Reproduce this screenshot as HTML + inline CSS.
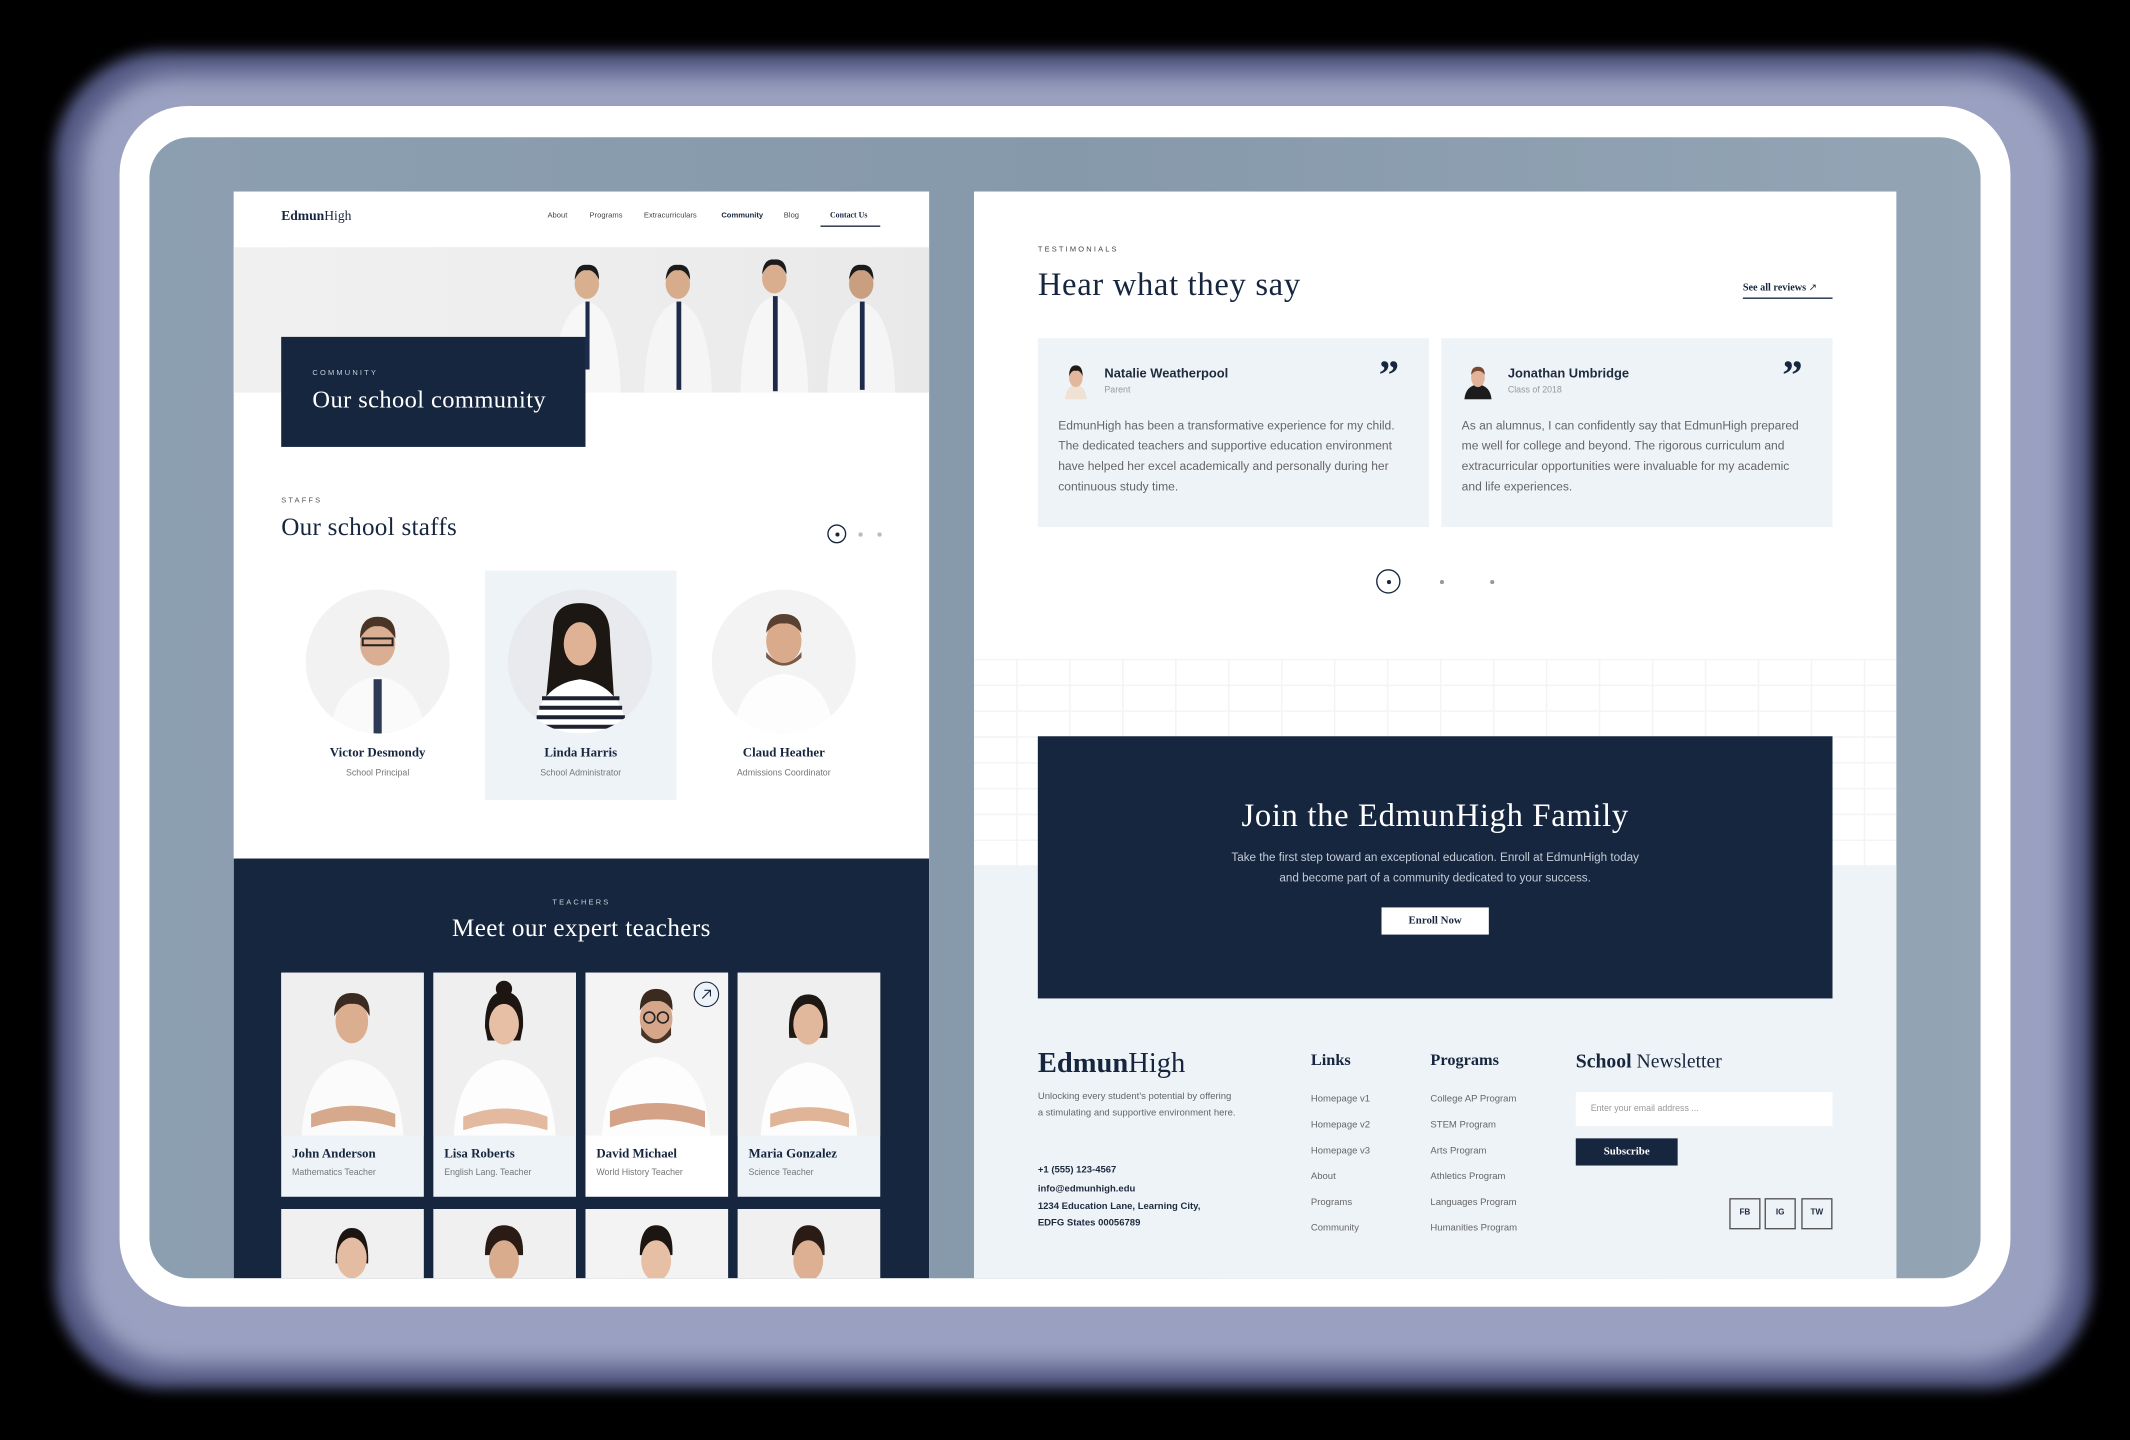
<!DOCTYPE html>
<html><head><meta charset="utf-8"><style>
*{margin:0;padding:0;box-sizing:border-box}
html,body{width:2130px;height:1440px;background:#000;overflow:hidden}
#s{position:absolute;left:0;top:0;width:1568px;height:1060px;transform:scale(1.35842);transform-origin:0 0;font-family:"Liberation Sans",sans-serif}
.a{position:absolute}
.serif{font-family:"Liberation Serif",serif}
.lbl{font-size:5.5px;letter-spacing:1.6px;color:#555}
.navy{background:#17263f}
.card{background:#eef3f8}
.nm{font-family:"Liberation Serif",serif;font-weight:bold;font-size:9.5px;color:#17263f}
.rl{font-size:6.5px;color:#777}
</style></head><body><div id="s">
<div class="a" style="left:40px;top:38px;width:1500px;height:984px;border-radius:80px;background:#6b72a8;filter:blur(5px);opacity:.8"></div>
<div class="a" style="left:60px;top:55px;width:1460px;height:950px;border-radius:70px;background:#9aa0c0;filter:blur(8px)"></div>
<div class="a" style="left:88px;top:78px;width:1392px;height:884px;border-radius:50px;background:#fff"></div>
<div class="a" style="left:110px;top:101px;width:1348px;height:840px;border-radius:30px;background:linear-gradient(90deg,#8c9fb0,#8699ab 50%,#93a5b5);overflow:hidden">

<!-- LEFT PAGE -->
<div class="a" style="left:62px;top:40px;width:512px;height:800px;background:#fff;overflow:hidden">
 <div class="a serif" style="left:35px;top:13px;font-size:10px;color:#17263f"><b>Edmun</b>High</div>
 <div class="a" style="left:231px;top:15px;font-size:5.6px;color:#444;white-space:nowrap">About</div>
 <div class="a" style="left:262px;top:15px;font-size:5.6px;color:#444">Programs</div>
 <div class="a" style="left:302px;top:15px;font-size:5.6px;color:#444">Extracurriculars</div>
 <div class="a" style="left:359px;top:15px;font-size:5.6px;color:#17263f;font-weight:bold">Community</div>
 <div class="a" style="left:405px;top:15px;font-size:5.6px;color:#444">Blog</div>
 <div class="a serif" style="left:439px;top:15px;font-size:5.8px;color:#17263f;font-weight:bold">Contact Us</div>
 <div class="a" style="left:432px;top:25px;width:44px;height:1.3px;background:#17263f"></div>
 <div class="a" style="left:0;top:41px;width:512px;height:107px;background:linear-gradient(90deg,#f0f0f0,#eeeeee 45%,#e9e9e9)">
  <svg class="a" style="left:225px;top:0" width="287" height="107" viewBox="0 0 287 107">
   <g><path d="M10 107 Q12 45 35 40 Q58 45 60 107Z" fill="#f7f7f7"/><ellipse cx="35" cy="27" rx="9" ry="11" fill="#d8b090"/><path d="M26 24 Q27 12 35 13 Q44 12 44 24 Q40 16 35 17 Q30 16 26 24Z" fill="#1b1b1b"/><rect x="34" y="40" width="3" height="50" fill="#1d2a4a"/></g>
   <g transform="translate(65,0)"><path d="M12 107 Q14 45 37 40 Q60 45 62 107Z" fill="#f5f5f5"/><ellipse cx="37" cy="27" rx="9" ry="11" fill="#d6ac8c"/><path d="M28 24 Q29 12 37 13 Q46 12 46 24 Q42 16 37 17 Q32 16 28 24Z" fill="#1b1b1b"/><rect x="36" y="40" width="3.5" height="65" fill="#1d2a4a"/></g>
   <g transform="translate(136,-4)"><path d="M12 111 Q14 45 37 40 Q60 45 62 111Z" fill="#f6f6f6"/><ellipse cx="37" cy="27" rx="9" ry="11" fill="#d8ae8e"/><path d="M28 24 Q29 12 37 13 Q46 12 46 24 Q42 16 37 17 Q32 16 28 24Z" fill="#1b1b1b"/><rect x="36" y="40" width="3.5" height="70" fill="#1d2a4a"/></g>
   <g transform="translate(200,0)"><path d="M12 107 Q14 45 37 40 Q60 45 62 107Z" fill="#f5f5f5"/><ellipse cx="37" cy="27" rx="9" ry="11" fill="#c99f80"/><path d="M28 24 Q29 12 37 13 Q46 12 46 24 Q42 16 37 17 Q32 16 28 24Z" fill="#1b1b1b"/><rect x="36" y="40" width="3.5" height="65" fill="#1d2a4a"/></g>
  </svg>
 </div>
 <div class="a navy" style="left:35px;top:107px;width:224px;height:81px">
  <div class="a lbl" style="left:23px;top:24px;color:#c5cdd9">COMMUNITY</div>
  <div class="a serif" style="left:23px;top:36px;font-size:18px;letter-spacing:.3px;color:#fff;white-space:nowrap">Our school community</div>
 </div>
 <div class="a lbl" style="left:35px;top:225px">STAFFS</div>
 <div class="a serif" style="left:35px;top:238px;font-size:18.5px;letter-spacing:.2px;color:#17263f;white-space:nowrap">Our school staffs</div>
 <div class="a" style="left:437px;top:245px;width:14px;height:14px;border:1px solid #17263f;border-radius:50%"><div class="a" style="left:4.5px;top:4.5px;width:3px;height:3px;border-radius:50%;background:#17263f"></div></div>
 <div class="a" style="left:460px;top:251px;width:2.5px;height:2.5px;border-radius:50%;background:#bbb"></div>
 <div class="a" style="left:474px;top:251px;width:2.5px;height:2.5px;border-radius:50%;background:#bbb"></div>
 <div class="a card" style="left:185px;top:279px;width:141px;height:169px"></div>
 <svg class="a" style="left:53px;top:293px" width="106" height="106" viewBox="0 0 106 106"><clipPath id="c1"><circle cx="53" cy="53" r="53"/></clipPath><g clip-path="url(#c1)"><rect width="106" height="106" fill="#f2f2f2"/><path d="M18 106 Q22 68 53 64 Q84 68 88 106Z" fill="#fafafa"/><rect x="50" y="66" width="6" height="40" fill="#2d3a55"/><ellipse cx="53" cy="40" rx="13" ry="16" fill="#d9ae92"/><path d="M40 36 Q40 20 53 20 Q67 20 66 36 Q60 26 53 27 Q46 26 40 36Z" fill="#4a3426"/><rect x="42" y="36" width="22" height="5" fill="none" stroke="#222" stroke-width="1.5"/></g></svg>
 <svg class="a" style="left:202px;top:293px" width="106" height="106" viewBox="0 0 106 106"><clipPath id="c2"><circle cx="53" cy="53" r="53"/></clipPath><g clip-path="url(#c2)"><rect width="106" height="106" fill="#e8eaed"/><path d="M33 30 Q33 10 53 10 Q75 10 75 34 L78 80 L28 80Z" fill="#1d1714"/><path d="M18 106 Q22 70 53 66 Q84 70 88 106Z" fill="#fff"/><path d="M25 80 H82 M23 87 H84 M21 94 H86 M20 101 H87" stroke="#1e2230" stroke-width="3"/><ellipse cx="53" cy="40" rx="12" ry="16" fill="#dfb296"/></g></svg>
 <svg class="a" style="left:352px;top:293px" width="106" height="106" viewBox="0 0 106 106"><clipPath id="c3"><circle cx="53" cy="53" r="53"/></clipPath><g clip-path="url(#c3)"><rect width="106" height="106" fill="#f3f3f3"/><path d="M16 106 Q20 66 53 62 Q86 66 90 106Z" fill="#fdfdfd"/><ellipse cx="53" cy="38" rx="13" ry="16" fill="#d9ab8c"/><path d="M40 46 Q53 62 66 46 L66 50 Q53 62 40 50Z" fill="#7a5a44"/><path d="M40 32 Q41 18 53 18 Q66 18 66 32 Q60 24 53 25 Q46 24 40 32Z" fill="#5a4030"/></g></svg>
 <div class="a nm" style="left:35px;top:409px;width:142px;text-align:center">Victor Desmondy</div>
 <div class="a rl" style="left:35px;top:425px;width:142px;text-align:center">School Principal</div>
 <div class="a nm" style="left:185px;top:409px;width:141px;text-align:center">Linda Harris</div>
 <div class="a rl" style="left:185px;top:425px;width:141px;text-align:center">School Administrator</div>
 <div class="a nm" style="left:334px;top:409px;width:142px;text-align:center">Claud Heather</div>
 <div class="a rl" style="left:334px;top:425px;width:142px;text-align:center">Admissions Coordinator</div>
 <div class="a navy" style="left:0;top:491px;width:512px;height:320px">
  <div class="a lbl" style="left:0;top:30px;width:512px;text-align:center;color:#c5cdd9">TEACHERS</div>
  <div class="a serif" style="left:0;top:42px;width:512px;text-align:center;font-size:18.5px;letter-spacing:.3px;color:#fff">Meet our expert teachers</div>
 </div>
</div>

<!-- RIGHT PAGE -->
<div class="a" style="left:607px;top:40px;width:679px;height:800px;background:#fff;overflow:hidden">
 <div class="a lbl" style="left:47px;top:40px;color:#444">TESTIMONIALS</div>
 <div class="a serif" style="left:47px;top:56px;font-size:24px;letter-spacing:.5px;color:#17263f;white-space:nowrap">Hear what they say</div>
 <div class="a serif" style="left:566px;top:66px;font-size:7.5px;font-weight:bold;color:#17263f;white-space:nowrap">See all reviews <span style="font-weight:normal;font-family:'Liberation Sans'">↗</span></div>
 <div class="a" style="left:566px;top:78px;width:66px;height:1.3px;background:#17263f"></div>
 <div class="a card" style="left:47px;top:108px;width:288px;height:139px">
  <svg class="a" style="left:16px;top:17px" width="24" height="28" viewBox="0 0 24 28"><path d="M4 28 Q5 18 12 17 Q19 18 20 28Z" fill="#efe1d4"/><ellipse cx="12" cy="12" rx="5" ry="7" fill="#e2b79c"/><path d="M7 11 Q7 3 12 3 Q17 3 17 11 Q15 6 12 7 Q9 6 7 11Z" fill="#221a16"/></svg>
  <div class="a" style="left:49px;top:21px;font-size:9.5px;font-weight:bold;color:#1e2a3e;white-space:nowrap">Natalie Weatherpool</div>
  <div class="a rl" style="left:49px;top:35px;color:#999">Parent</div>
  <div class="a serif" style="left:251px;top:13px;font-size:30px;font-weight:bold;color:#17263f;line-height:1">”</div>
  <div class="a" style="left:15px;top:57px;width:258px;font-size:8.9px;line-height:15px;color:#666">EdmunHigh has been a transformative experience for my child. The dedicated teachers and supportive education environment have helped her excel academically and personally during her continuous study time.</div>
 </div>
 <div class="a card" style="left:344px;top:108px;width:288px;height:139px">
  <svg class="a" style="left:14px;top:17px" width="26" height="28" viewBox="0 0 26 28"><path d="M3 28 Q4 18 13 17 Q22 18 23 28Z" fill="#1c1c1c"/><ellipse cx="13" cy="12" rx="5" ry="7" fill="#e0b39a"/><path d="M8 10 Q8 4 13 4 Q18 4 18 10 Q16 7 13 7 Q10 7 8 10Z" fill="#7a4a30"/></svg>
  <div class="a" style="left:49px;top:21px;font-size:9.5px;font-weight:bold;color:#1e2a3e;white-space:nowrap">Jonathan Umbridge</div>
  <div class="a rl" style="left:49px;top:35px;color:#999">Class of 2018</div>
  <div class="a serif" style="left:251px;top:13px;font-size:30px;font-weight:bold;color:#17263f;line-height:1">”</div>
  <div class="a" style="left:15px;top:57px;width:258px;font-size:8.9px;line-height:15px;color:#666">As an alumnus, I can confidently say that EdmunHigh prepared me well for college and beyond. The rigorous curriculum and extracurricular opportunities were invaluable for my academic and life experiences.</div>
 </div>
 <div class="a" style="left:296px;top:278px;width:18px;height:18px;border:1px solid #17263f;border-radius:50%"><div class="a" style="left:6.5px;top:6.5px;width:3px;height:3px;border-radius:50%;background:#17263f"></div></div>
 <div class="a" style="left:343px;top:286px;width:3px;height:3px;border-radius:50%;background:#999"></div>
 <div class="a" style="left:380px;top:286px;width:3px;height:3px;border-radius:50%;background:#999"></div>
 <div class="a" style="left:0;top:344px;width:679px;height:152px;background-image:linear-gradient(#f1f3f6 1px,transparent 1px),linear-gradient(90deg,#f1f3f6 1px,transparent 1px);background-size:39px 19px;background-position:-8px 0;opacity:.9"></div>
 <div class="a" style="left:0;top:496px;width:679px;height:304px;background:#eef3f8"></div>
 <div class="a navy" style="left:47px;top:401px;width:585px;height:193px">
  <div class="a serif" style="left:0;top:46px;width:585px;text-align:center;font-size:24px;letter-spacing:.5px;color:#fff">Join the EdmunHigh Family</div>
  <div class="a" style="left:0;top:82px;width:585px;text-align:center;font-size:8.6px;line-height:15px;color:#c3cbd7">Take the first step toward an exceptional education. Enroll at EdmunHigh today<br>and become part of a community dedicated to your success.</div>
  <div class="a serif" style="left:253px;top:126px;width:79px;height:20px;background:#fff;color:#17263f;font-size:8px;font-weight:bold;text-align:center;line-height:20px">Enroll Now</div>
 </div>
 <div class="a serif" style="left:47px;top:629px;font-size:21px;color:#17263f;white-space:nowrap"><b>Edmun</b>High</div>
 <div class="a" style="left:47px;top:661px;font-size:7px;line-height:12px;color:#666;white-space:nowrap">Unlocking every student's potential by offering<br>a stimulating and supportive environment here.</div>
 <div class="a" style="left:47px;top:714px;font-size:7px;font-weight:bold;color:#1e2a3e;line-height:14px;white-space:nowrap">+1 (555) 123-4567<br>info@edmunhigh.edu</div>
 <div class="a" style="left:47px;top:742px;font-size:7px;font-weight:bold;color:#1e2a3e;line-height:12px;white-space:nowrap">1234 Education Lane, Learning City,<br>EDFG States 00056789</div>
 <div class="a serif" style="left:248px;top:632px;font-size:12px;font-weight:bold;color:#17263f">Links</div>
 <div class="a" style="left:248px;top:659px;font-size:7px;line-height:19px;color:#666;white-space:nowrap">Homepage v1<br>Homepage v2<br>Homepage v3<br>About<br>Programs<br>Community</div>
 <div class="a serif" style="left:336px;top:632px;font-size:12px;font-weight:bold;color:#17263f">Programs</div>
 <div class="a" style="left:336px;top:659px;font-size:7px;line-height:19px;color:#666;white-space:nowrap">College AP Program<br>STEM Program<br>Arts Program<br>Athletics Program<br>Languages Program<br>Humanities Program</div>
 <div class="a serif" style="left:443px;top:633px;font-size:14.5px;color:#17263f;white-space:nowrap"><b>School</b> Newsletter</div>
 <div class="a" style="left:443px;top:663px;width:189px;height:25px;background:#fff;font-size:6.5px;color:#999;padding:9px 0 0 11px">Enter your email address ...</div>
 <div class="a navy serif" style="left:443px;top:697px;width:75px;height:20px;color:#fff;font-size:8px;font-weight:bold;text-align:center;line-height:20px">Subscribe</div>
 <div class="a" style="left:556px;top:741px;width:23px;height:23px;border:1px solid #555;font-size:6px;font-weight:bold;text-align:center;line-height:21px;color:#1e2a3e">FB</div>
 <div class="a" style="left:582px;top:741px;width:23px;height:23px;border:1px solid #555;font-size:6px;font-weight:bold;text-align:center;line-height:21px;color:#1e2a3e">IG</div>
 <div class="a" style="left:609px;top:741px;width:23px;height:23px;border:1px solid #555;font-size:6px;font-weight:bold;text-align:center;line-height:21px;color:#1e2a3e">TW</div>
</div>
</div>

<div class="a" style="left:172px;top:141px;width:512px;height:800px;overflow:hidden">
 <div class="a card" style="left:35px;top:575px;width:105px;height:165px"><svg width="105" height="120" viewBox="0 0 105 120"><rect width="105" height="120" fill="#efefef"/><path d="M15 120 Q18 68 52 64 Q87 68 90 120Z" fill="#fbfbfb"/><path d="M22 104 Q52 92 84 104 L84 114 Q52 104 22 114Z" fill="#d7a98c"/><ellipse cx="52" cy="36" rx="12" ry="16" fill="#dcae90"/><path d="M39 32 Q39 15 52 15 Q66 15 65 32 Q60 22 52 23 Q45 22 39 32Z" fill="#3a2a20"/></svg><div class="a nm" style="left:8px;top:129px">John Anderson</div><div class="a rl" style="left:8px;top:144px">Mathematics Teacher</div></div>
 <div class="a card" style="left:147px;top:575px;width:105px;height:165px"><svg width="105" height="120" viewBox="0 0 105 120"><rect width="105" height="120" fill="#efefef"/><path d="M15 120 Q18 68 52 64 Q87 68 90 120Z" fill="#fdfdfd"/><path d="M22 106 Q52 94 84 106 L84 116 Q52 106 22 116Z" fill="#e3b9a0"/><path d="M38 40 Q38 14 52 14 Q67 14 66 40 L64 50 L40 50Z" fill="#1c1512"/><circle cx="52" cy="12" r="6" fill="#1c1512"/><ellipse cx="52" cy="38" rx="11" ry="15" fill="#e6bfa5"/></svg><div class="a nm" style="left:8px;top:129px">Lisa Roberts</div><div class="a rl" style="left:8px;top:144px">English Lang. Teacher</div></div>
 <div class="a" style="left:259px;top:575px;width:105px;height:165px;background:#fff"><svg width="105" height="120" viewBox="0 0 105 120"><rect width="105" height="120" fill="#f4f4f4"/><path d="M12 120 Q16 66 52 62 Q88 66 92 120Z" fill="#fdfdfd"/><path d="M18 102 Q52 90 88 102 L88 114 Q52 102 18 114Z" fill="#d4a286"/><ellipse cx="52" cy="34" rx="12" ry="16" fill="#d6a68a"/><path d="M41 40 Q52 58 63 40 L63 46 Q52 58 41 46Z" fill="#4a3428"/><path d="M40 28 Q40 12 52 12 Q65 12 64 28 Q59 20 52 21 Q45 20 40 28Z" fill="#3a2a20"/><circle cx="47" cy="33" r="4" fill="none" stroke="#222" stroke-width="1.2"/><circle cx="57" cy="33" r="4" fill="none" stroke="#222" stroke-width="1.2"/><circle cx="89" cy="16" r="9" fill="#eef3f8" stroke="#17263f" stroke-width=".8"/><path d="M86 19 L92 13 M87.5 13 H92 V17.5" stroke="#17263f" stroke-width=".8" fill="none"/></svg><div class="a nm" style="left:8px;top:129px">David Michael</div><div class="a rl" style="left:8px;top:144px">World History Teacher</div></div>
 <div class="a card" style="left:371px;top:575px;width:105px;height:165px"><svg width="105" height="120" viewBox="0 0 105 120"><rect width="105" height="120" fill="#efefef"/><path d="M17 120 Q20 70 52 66 Q85 70 88 120Z" fill="#fdfdfd"/><path d="M24 104 Q52 94 82 104 L82 114 Q52 104 24 114Z" fill="#e0b497"/><path d="M38 48 Q36 16 52 16 Q68 16 66 48Z" fill="#1e1814"/><ellipse cx="52" cy="38" rx="11" ry="15" fill="#e2b89c"/></svg><div class="a nm" style="left:8px;top:129px">Maria Gonzalez</div><div class="a rl" style="left:8px;top:144px">Science Teacher</div></div>
 <div class="a" style="left:35px;top:749px;width:105px;height:60px;background:#f0f0f0"><svg width="105" height="60"><path d="M40 40 Q40 14 52 14 Q65 14 64 40Z" fill="#1c1512"/><ellipse cx="52" cy="36" rx="11" ry="15" fill="#e4bca2"/></svg></div>
 <div class="a" style="left:147px;top:749px;width:105px;height:60px;background:#f0f0f0"><svg width="105" height="60"><path d="M38 34 Q38 12 52 12 Q67 12 66 34Z" fill="#2a1c14"/><ellipse cx="52" cy="38" rx="11" ry="15" fill="#d9ac8e"/></svg></div>
 <div class="a" style="left:259px;top:749px;width:105px;height:60px;background:#f3f3f3"><svg width="105" height="60"><path d="M40 34 Q40 12 52 12 Q65 12 64 34Z" fill="#1c1512"/><ellipse cx="52" cy="38" rx="11" ry="15" fill="#e6bfa5"/></svg></div>
 <div class="a" style="left:371px;top:749px;width:105px;height:60px;background:#f0f0f0"><svg width="105" height="60"><path d="M40 34 Q40 12 52 12 Q65 12 64 34Z" fill="#2a1c14"/><ellipse cx="52" cy="38" rx="11" ry="15" fill="#ddb094"/></svg></div>
</div>
</div></body></html>
